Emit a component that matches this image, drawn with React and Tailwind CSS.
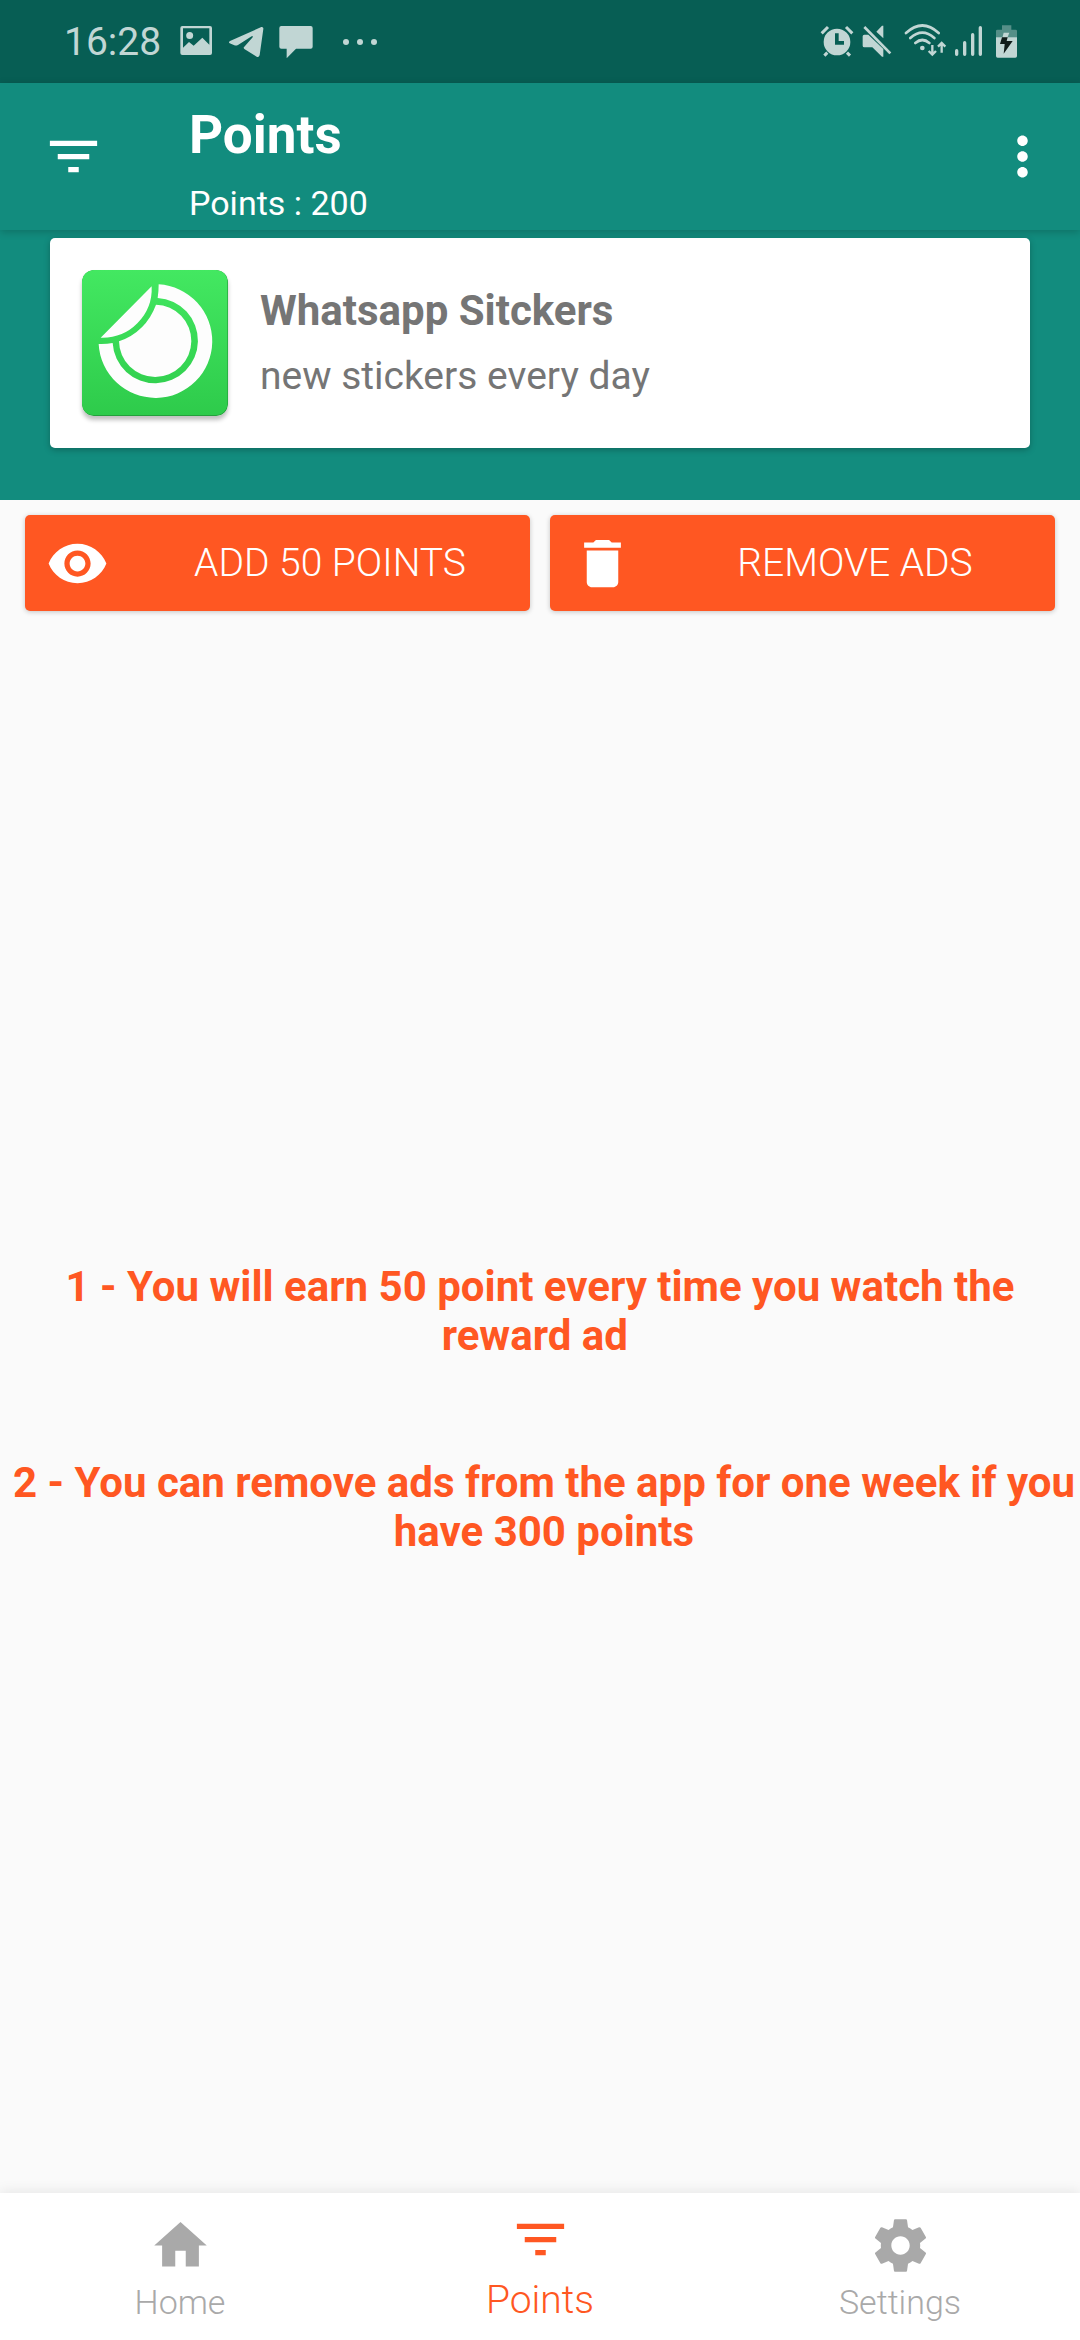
import React from "react";

const FILTER = "M10 18h4v-2h-4v2zM3 6v2h18V6H3zm3 7h12v-2H6v2z";
const MORE =
  "M12 8c1.1 0 2-.9 2-2s-.9-2-2-2-2 .9-2 2 .9 2 2 2zm0 2c-1.1 0-2 .9-2 2s.9 2 2 2 2-.9 2-2-.9-2-2-2zm0 6c-1.1 0-2 .9-2 2s.9 2 2 2 2-.9 2-2-.9-2-2-2z";
const EYE =
  "M12 4.5C7 4.5 2.73 7.61 1 12c1.73 4.39 6 7.5 11 7.5s9.27-3.11 11-7.5c-1.73-4.39-6-7.5-11-7.5zM12 17c-2.76 0-5-2.24-5-5s2.24-5 5-5 5 2.24 5 5-2.24 5-5 5zm0-8c-1.66 0-3 1.34-3 3s1.34 3 3 3 3-1.34 3-3-1.34-3-3-3z";
const TRASH =
  "M6 19c0 1.1.9 2 2 2h8c1.1 0 2-.9 2-2V7H6v12zM19 4h-3.5l-1-1h-5l-1 1H5v2h14V4z";
const HOME = "M10 20v-6h4v6h5v-8h3L12 3 2 12h3v8z";
const GEAR =
  "M19.43 12.98c.04-.32.07-.64.07-.98s-.03-.66-.07-.98l2.11-1.65c.19-.15.24-.42.12-.64l-2-3.46c-.12-.22-.39-.3-.61-.22l-2.49 1c-.52-.4-1.08-.73-1.69-.98l-.38-2.65C14.46 2.18 14.25 2 14 2h-4c-.25 0-.46.18-.49.42l-.38 2.65c-.61.25-1.17.59-1.69.98l-2.49-1c-.23-.09-.49 0-.61.22l-2 3.46c-.13.22-.07.49.12.64l2.11 1.65c-.04.32-.07.65-.07.98s.03.66.07.98l-2.11 1.65c-.19.15-.24.42-.12.64l2 3.46c.12.22.39.3.61.22l2.49-1c.52.4 1.08.73 1.69.98l.38 2.65c.03.24.24.42.49.42h4c.25 0 .46-.18.49-.42l.38-2.65c.61-.25 1.17-.59 1.69-.98l2.49 1c.23.09.49 0 .61-.22l2-3.46c.12-.22.07-.49-.12-.64l-2.11-1.65zM12 15.5c-1.93 0-3.5-1.57-3.5-3.5s1.57-3.5 3.5-3.5 3.5 1.57 3.5 3.5-1.57 3.5-3.5 3.5z";

function Icon({ d }) {
  return (
    <svg viewBox="0 0 24 24" className="size-[63px] shrink-0" fill="currentColor" aria-hidden="true">
      <path d={d} />
    </svg>
  );
}

function StatusBar() {
  return (
    <div className="flex h-[83px] items-center justify-between bg-[#075e54] pr-[62px] pl-16 text-[#c1d6d4]">
      <div className="flex items-center">
        <span className="text-[39px] leading-[48px]">16:28</span>
        {/* picture, telegram, chat bubble */}
        <svg viewBox="0 0 480 165" className="ml-2 h-[55px] w-40" fill="currentColor" aria-hidden="true">
          <path
            fillRule="evenodd"
            d="M40 36H123Q129 36 129 42V117Q129 123 123 123H40Q34 123 34 117V42Q34 36 40 36ZM42 43V101L60 84L74 95L100 71L121 92V43ZM62 54A10 10 0 1 1 62 75A10 10 0 1 1 62 54Z"
          />
          <path d="M277 39Q284 38 283 45L272 123Q270 131 263 128L226 105Q222 101 226 98L251 70Q254 65 248 67L207 93Q201 96 196 94L182 88Q177 85 183 81Z" />
          <path d="M337 36H425Q431 36 431 42V98Q431 104 425 104H381L353 133V104H337Q331 104 331 98V42Q331 36 337 36Z" />
        </svg>
        <svg viewBox="0 0 34 8" className="ml-[14px] h-2 w-[34px]" fill="currentColor" aria-hidden="true">
          <circle cx="3" cy="4" r="3" />
          <circle cx="17" cy="4" r="3" />
          <circle cx="31" cy="4" r="3" />
        </svg>
      </div>
      {/* alarm, muted, wifi, signal, battery */}
      <svg viewBox="57 37 594 117" className="h-[39px] w-[198px]" fill="currentColor" stroke="none" aria-hidden="true">
        <path
          fillRule="evenodd"
          d="M108 57A40 40 0 1 1 108 137A40 40 0 1 1 108 57ZM102 71V105H129V94H113V71Z"
        />
        <path
          d="M62 71L81 52M154 71L135 52M79 129L70 138M138 129L147 138"
          fill="none"
          stroke="currentColor"
          strokeWidth="9"
        />
        <path d="M190 75H202L247 118V141H243L214 113H190Q185 113 185 108V80Q185 75 190 75ZM243 48H247V86L226 66Z" />
        <path d="M190 52L268 131" fill="none" stroke="currentColor" strokeWidth="8" />
        <path
          d="M315 70Q364 25 413 70M328 85Q364 53 400 85M343 100Q364 82 385 100"
          fill="none"
          stroke="currentColor"
          strokeWidth="8"
          strokeLinecap="round"
        />
        <circle cx="364" cy="115" r="7" />
        <path
          d="M394 106V134M383 124L394 135L405 124M422 129V101M411 111L422 100L433 111"
          fill="none"
          stroke="currentColor"
          strokeWidth="7"
        />
        <path
          d="M467 123V134M491 99V134M515 75V134M538 54V134"
          fill="none"
          stroke="currentColor"
          strokeWidth="10"
          strokeLinecap="round"
        />
        <path d="M603 47H631V60H644Q648 60 648 64V84H585V64Q585 60 589 60H603Z" fill="#558f88" />
        <path d="M585 83H648V139Q648 144 643 144H590Q585 144 585 139Z" />
        <path d="M608 69H625L619 84H604Z" />
        <path d="M603 83H620L617 94H635L608 132L611 103H597Z" fill="#101c1a" />
      </svg>
    </div>
  );
}

function AppLogo() {
  return (
    <svg
      viewBox="36 30 438 438"
      className="size-[146px] shrink-0 rounded-xl shadow-[0_4px_4px_rgba(0,0,0,0.25)]"
      role="img"
      aria-label="Stickers"
    >
      <defs>
        <linearGradient id="logoFill" x1="0" y1="0" x2="0" y2="1">
          <stop offset="0" stopColor="#43e861" />
          <stop offset="1" stopColor="#2ecb4b" />
        </linearGradient>
      </defs>
      <rect x="36" y="30" width="438" height="438" rx="34" fill="#24a03c" />
      <rect x="36" y="30" width="436" height="435" rx="34" fill="url(#logoFill)" />
      <g fill="#fdfdfd">
        <path d="M266 73A170.500 170.500 0 1 1 86 252Q108 253 128 249A128 128 0 1 0 263 114Q266 94 266 73Z" />
        <path d="M258 134A108.500 108.500 0 1 1 147 244Q228 215 258 134Z" />
        <path d="M245 79L92 233Q158 235 202 190Q248 144 245 79Z" />
      </g>
    </svg>
  );
}

function ActionButton({ d, children }) {
  return (
    <button
      type="button"
      className="flex h-24 flex-1 items-center gap-[42px] rounded-[5px] bg-[#ff5722] px-[21px] text-white shadow-[0_1px_5px_rgba(0,0,0,0.22)]"
    >
      <Icon d={d} />
      <span className="flex-1 text-center text-[39px] leading-[48px] font-light">{children}</span>
    </button>
  );
}

function NavItem({ d, label, active }) {
  return (
    <a
      href={"#" + label.toLowerCase()}
      aria-current={active ? "page" : undefined}
      className={
        active
          ? "flex flex-1 flex-col items-center gap-1.5 pt-[15px] text-[39px] leading-[46px] text-[#ff5722]"
          : "flex flex-1 flex-col items-center gap-1.5 pt-[21px] text-[34px] leading-[38px] text-[#a9a9a9]"
      }
    >
      <Icon d={d} />
      <span className="font-light">{label}</span>
    </a>
  );
}

export default function App() {
  return (
    <div className="flex min-h-screen flex-col bg-[#fafafa] font-['Roboto',sans-serif]">
      <StatusBar />

      <header className="relative flex h-[147px] items-center bg-[#128c7e] pr-[26px] pl-[42px] text-white shadow-[0_2px_8px_rgba(0,0,0,0.2)]">
        <button type="button" aria-label="Filter">
          <Icon d={FILTER} />
        </button>
        <div className="ml-[84px] flex flex-1 flex-col gap-4 self-start pt-5">
          <h1 className="text-[53px] leading-[64px] font-bold">Points</h1>
          <p className="text-[34px] leading-[40px]">Points : 200</p>
        </div>
        <button type="button" aria-label="More options">
          <Icon d={MORE} />
        </button>
      </header>

      <section className="bg-[#128c7e] px-[50px] pt-2 pb-[52px]">
        <div className="flex items-center gap-8 rounded-[5px] bg-white p-8 text-[#757575] shadow-[0_2px_6px_rgba(0,0,0,0.25)]">
          <AppLogo />
          <div className="flex flex-col gap-4">
            <h2 className="text-[42px] leading-[50px] font-bold">Whatsapp Sitckers</h2>
            <p className="text-[39px] leading-[48px]">new stickers every day</p>
          </div>
        </div>
      </section>

      <div className="flex gap-5 px-[25px] pt-[15px]">
        <ActionButton d={EYE}>ADD 50 POINTS</ActionButton>
        <ActionButton d={TRASH}>REMOVE ADS</ActionButton>
      </div>

      <main className="flex flex-1 flex-col justify-center gap-[98px] pt-[14px] text-center text-[42px] leading-[49px] font-bold text-[#ff5722]">
        <p>1 - You will earn 50 point every time you watch the reward ad&nbsp;</p>
        <p className="pl-2">2 - You can remove ads from the app for one week if you have 300 points</p>
      </main>

      <nav className="flex h-[147px] bg-white shadow-[0_-2px_12px_rgba(0,0,0,0.08)]">
        <NavItem d={HOME} label="Home" />
        <NavItem d={FILTER} label="Points" active />
        <NavItem d={GEAR} label="Settings" />
      </nav>
    </div>
  );
}
